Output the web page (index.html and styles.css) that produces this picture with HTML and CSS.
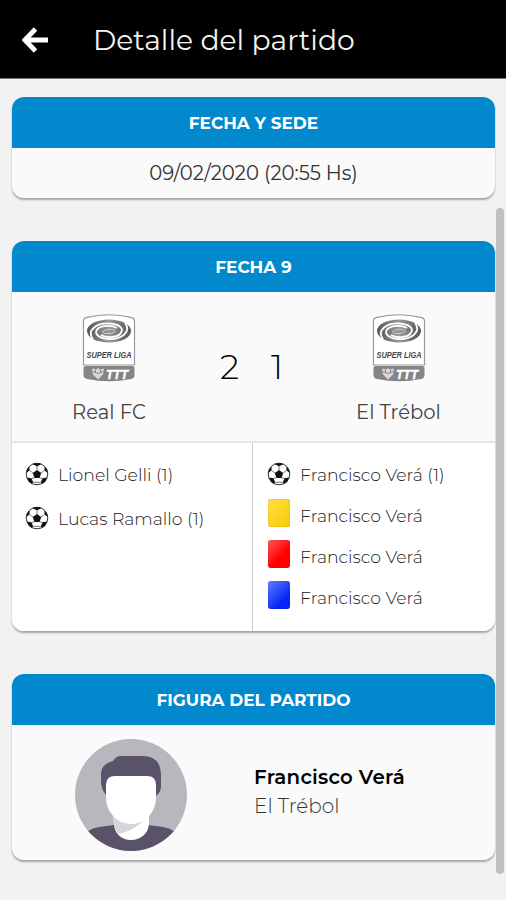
FILE: index.html
```html
<!DOCTYPE html>
<html lang="es">
<head>
<meta charset="utf-8">
<meta name="viewport" content="width=device-width">
<title>Detalle del partido</title>
<link rel="stylesheet" href="styles.css">
</head>
<body>
<svg class="defs" aria-hidden="true">
  <defs>
    <linearGradient id="metal" x1="0" x2="1"><stop stop-color="#555"/><stop offset=".5" stop-color="#999"/><stop offset="1" stop-color="#555"/></linearGradient>
    <symbol id="ball" viewBox="0 0 24 24">
      <circle cx="12" cy="12" r="10.800" fill="#fff" stroke="#333" stroke-width="1"/>
      <path d="M12 8l4.200 3.100-1.600 4.900H9.400l-1.600-4.900zM7.500 2.300l4.500 2 4.500-2-2-1H9.500zM1.200 11l3.300-2.600L4.500 4.500 2.500 6.800zM22.800 11l-3.300-2.600L19.500 4.500 21.500 6.800zM2 15.500l4.400.8 1.800 4-1.500 1.600-3.200-2.500zM22 15.500l-4.400.8-1.800 4 1.500 1.600 3.200-2.500z" fill="#111"/>
      <path d="M12 4v4M4.500 8.300l3.500 2.800M19.500 8.300l-3.500 2.800M9.400 16l-3 .4M14.600 16l3 .4M8.200 20.300h7.600" fill="none" stroke="#555" stroke-width=".8"/>
    </symbol>
    <symbol id="crest" viewBox="0 0 54 70">
      <path d="M1.500 52V8Q1.500 5 5 4.300Q27-.8 49 4.300Q52.500 5 52.500 8V52z" fill="#fff" stroke="#999" stroke-width="1.200"/>
      <ellipse cx="27" cy="18" rx="22" ry="11.500" fill="url(#metal)"/>
      <path d="M11 26C4 17 15 10 27 10.500C38 11 43 16 38 21C34 25 24 25 19 22" fill="none" stroke="#fff" stroke-width="1.800"/>
      <path d="M43 10C50 19 39 26.500 27 26C16 25.500 11 20 16 15.500C20 12 30 12 35 15" fill="none" stroke="#fff" stroke-width="1.800"/>
      <path d="M20 19q5-4 13-2M34 18q-5 4-13 2" fill="none" stroke="#ccc" stroke-width="1"/>
      <text class="crest-name" x="27" y="45" text-anchor="middle" textLength="45" lengthAdjust="spacingAndGlyphs">SUPER LIGA</text>
      <path d="M1.500 54.500Q1.500 53 4 53H50Q52.500 53 52.500 54.500V62Q52.500 65 49 66Q27 70.500 5 66Q1.500 65 1.500 62z" fill="#858585"/>
      <path d="M10 55.500l4 1 2-1.500 2 1.500 4-1-1 6-5 5-5-5z" fill="#d8d8d8"/>
      <path d="M11 58.500l5 2 5-2M13.500 57v2M18.500 57v2" fill="none" stroke="#888"/>
      <text class="crest-mark" x="35" y="65.500" text-anchor="middle" textLength="22" lengthAdjust="spacingAndGlyphs">TTT</text>
    </symbol>
  </defs>
</svg>

<header class="topbar">
  <svg class="back" viewBox="0 0 26 26"><path d="M13.500 2L2.800 13l10.700 11M3 13H26" fill="none" stroke="#fff" stroke-width="4.800"/></svg>
  <h1 class="title">Detalle del partido</h1>
</header>

<main class="content">
  <section class="card">
    <h2 class="card-head">FECHA Y SEDE</h2>
    <div class="venue"><span class="date">09/02/2020 (20:55 Hs)</span></div>
  </section>

  <section class="card">
    <h2 class="card-head">FECHA 9</h2>
    <div class="score">
      <div class="team"><svg class="crest"><use href="#crest"/></svg><span class="team-name">Real FC</span></div>
      <div class="goals"><span>2</span><span>1</span></div>
      <div class="team"><svg class="crest"><use href="#crest"/></svg><span class="team-name">El Trébol</span></div>
    </div>
    <div class="events">
      <ul class="side">
        <li class="event goal"><svg class="ball"><use href="#ball"/></svg><span>Lionel Gelli (1)</span></li>
        <li class="event goal"><svg class="ball"><use href="#ball"/></svg><span>Lucas Ramallo (1)</span></li>
      </ul>
      <ul class="side visitor">
        <li class="event goal"><svg class="ball"><use href="#ball"/></svg><span>Francisco Verá (1)</span></li>
        <li class="event"><i class="booking yellow"></i><span>Francisco Verá</span></li>
        <li class="event"><i class="booking red"></i><span>Francisco Verá</span></li>
        <li class="event"><i class="booking blue"></i><span>Francisco Verá</span></li>
      </ul>
    </div>
  </section>

  <section class="card">
    <h2 class="card-head">FIGURA DEL PARTIDO</h2>
    <div class="figure">
      <svg class="avatar" viewBox="0 0 112 112">
        <clipPath id="round"><circle cx="56" cy="56" r="56"/></clipPath>
        <g clip-path="url(#round)">
          <path d="M0 0H112V112H0z" fill="#b7b8bd"/>
          <path d="M10 112V96Q13 90 24 88L39 86H73L88 88Q99 90 102 96V112z" fill="#5a5268"/>
          <path d="M38 76H74V84C74 94 66 101 56 101S39 94 39 84z" fill="#fff"/>
          <path d="M38.500 76H73Q62 91 44 95Q39 91 38.500 83z" fill="#d4d6da"/>
          <path d="M31 56Q26 50 26 42V35Q26 25 38 22Q41 17 46 17H68Q86 17 86 37V47Q86 53 81 57z" fill="#5a5268"/>
          <path d="M31 46Q31 37 40 37H72Q81 37 81 46V58C81 75 68 85 56 85S31 75 31 58z" fill="#fff"/>
        </g>
      </svg>
      <div class="player"><strong class="player-name">Francisco Verá</strong><span class="player-team">El Trébol</span></div>
    </div>
  </section>
</main>
<div class="scrollbar"></div>
</body>
</html>
```
FILE: styles.css
```css
* { box-sizing: border-box; }
body {
  margin: 0;
  height: 900px;
  overflow: hidden;
  background: #f2f2f2;
  color: #111;
  font-family: Montserrat, Inter, "Open Sans", sans-serif;
  font-weight: 300;
}
h1, h2, ul { margin: 0; padding: 0; }
.defs { position: absolute; width: 0; height: 0; }
.topbar {
  height: 79px;
  padding: 1px 22px 0;
  display: flex;
  align-items: center;
  background: #000;
  border-bottom: 1px solid #777;
}
.back { width: 26px; height: 26px; }
.title {
  margin-left: 45px;
  color: #f4f4f4;
  font-size: 28.200px;
  font-weight: 400;
  white-space: nowrap;
}
.content { padding: 18px 11px 0 12px; display: grid; gap: 43px; }
.card {
  border-radius: 12px;
  overflow: hidden;
  background: #fafafa;
  box-shadow: 0 2px 2px rgba(0, 0, 0, .32);
}
.card-head {
  height: 51px;
  display: flex;
  align-items: center;
  justify-content: center;
  background: #0288cc;
  color: #fff;
  font-size: 16.900px;
  font-weight: 700;
}
.venue { height: 50px; display: flex; align-items: center; justify-content: center; }
.date { font-size: 19.600px; font-weight: 400; color: #333; }
.score {
  height: 151px;
  display: grid;
  grid-template-columns: 194px 96px 193px;
  border-bottom: 2px solid #e6e6e6;
}
.team { display: flex; flex-direction: column; align-items: center; padding-top: 21px; }
.crest { width: 54px; height: 70px; }
.crest-name { font: italic 700 8.500px "Liberation Sans", sans-serif; fill: #444; }
.crest-mark { font: italic 700 13px "Liberation Sans", sans-serif; fill: #fff; stroke: #fff; stroke-width: .5px; }
.team-name { margin-top: 16px; font-size: 19.600px; line-height: 26px; font-weight: 400; color: #444; }
.goals { display: flex; justify-content: center; gap: 32px; padding: 54px 5px 0 0; font-size: 34px; line-height: 42px; color: #000; }
.events { height: 188px; display: grid; grid-template-columns: 240px 1fr; background: #fff; }
.side { list-style: none; padding: 9px 0 0 13px; }
.visitor { border-left: 1px solid #ccc; padding-left: 14px; }
.event { height: 41px; display: flex; align-items: center; gap: 10px; font-size: 17.300px; color: #222; }
.event:not(.goal) { position: relative; top: -1px; }
.goal { height: 44px; gap: 9px; }
.ball { width: 24px; height: 24px; }
.event span { white-space: nowrap; }
.booking { width: 22px; height: 28px; margin: -6px 0 0 1px; border-radius: 3px; box-shadow: inset 0 0 1px rgba(0, 0, 0, .5); }
.yellow { background: linear-gradient(135deg, #ffdf46, #f9ca00); }
.red { background: linear-gradient(135deg, #ff5a5a, #f00 60%); }
.blue { background: linear-gradient(135deg, #657dff, #0427f5 70%); }
.figure { height: 135px; display: flex; align-items: flex-start; padding: 14px 0 0 63px; }
.avatar { width: 112px; height: 112px; }
.player { display: flex; flex-direction: column; margin: 24px 0 0 67px; line-height: 29px; white-space: nowrap; }
.player-name { font-size: 19.800px; font-weight: 600; letter-spacing: .25px; color: #000; }
.player-team { font-size: 20px; color: #333; }
.scrollbar { position: absolute; left: 496px; top: 208px; width: 8px; height: 666px; border-radius: 4px; background: #bfbfbf; }
```
